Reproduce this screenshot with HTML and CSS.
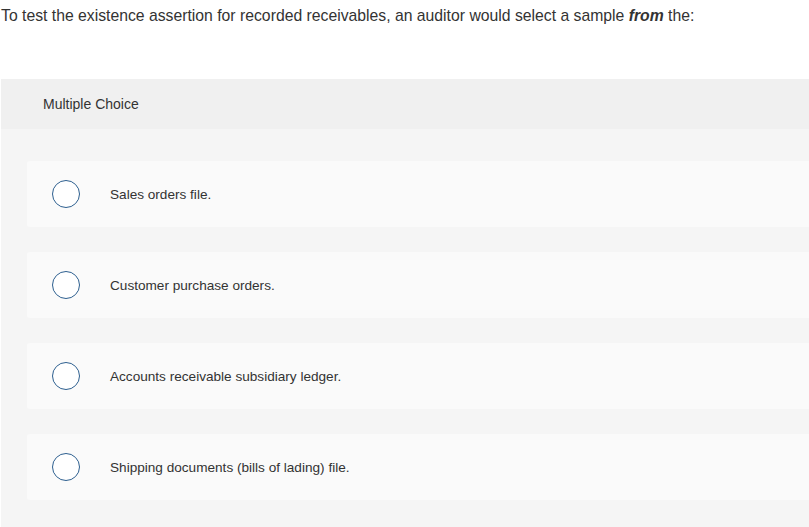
FILE: index.html
```html
<!DOCTYPE html>
<html>
<head>
<meta charset="utf-8">
<link rel="stylesheet" href="styles.css">
</head>
<body>
<p class="question">To test the existence assertion for recorded receivables, an auditor would select a sample <b><i>from</i></b> the:</p>
<section class="panel">
  <header class="panel-head">Multiple Choice</header>
  <div class="options">
    <label class="option"><span class="radio"></span><span class="opt-text">Sales orders file.</span></label>
    <label class="option"><span class="radio"></span><span class="opt-text">Customer purchase orders.</span></label>
    <label class="option"><span class="radio"></span><span class="opt-text">Accounts receivable subsidiary ledger.</span></label>
    <label class="option"><span class="radio"></span><span class="opt-text">Shipping documents (bills of lading) file.</span></label>
  </div>
</section>
</body>
</html>
```
FILE: styles.css
```css
html, body {
  margin: 0;
  padding: 0;
  background: #ffffff;
  font-family: "Liberation Sans", Arial, sans-serif;
  color: #333333;
  overflow: hidden;
}
.question {
  margin: 0;
  padding: 6px 0 0 1px;
  font-size: 15.75px;
  line-height: 20px;
  height: 73px;
}
.question b {
  font-weight: 700;
}
.panel {
  margin-left: 1px;
  background: #f5f5f5;
  height: 460px;
}
.panel-head {
  background: #f0f0f0;
  height: 50px;
  display: flex;
  align-items: center;
  padding-left: 42px;
  font-size: 14px;
  color: #333;
}
.options {
  display: flex;
  flex-direction: column;
  gap: 25px;
  padding: 32px 0 0 26px;
}
.option {
  display: flex;
  align-items: center;
  height: 66px;
  background: #fafafa;
  border-radius: 3px 0 0 3px;
  padding-left: 25px;
  margin-right: -4px;
}
.radio {
  box-sizing: border-box;
  width: 28px;
  height: 28px;
  border: 1.5px solid #2d5f8f;
  border-radius: 50%;
  background: #ffffff;
  flex: none;
}
.opt-text {
  margin-left: 30px;
  font-size: 13.6px;
  color: #333;
}
```
